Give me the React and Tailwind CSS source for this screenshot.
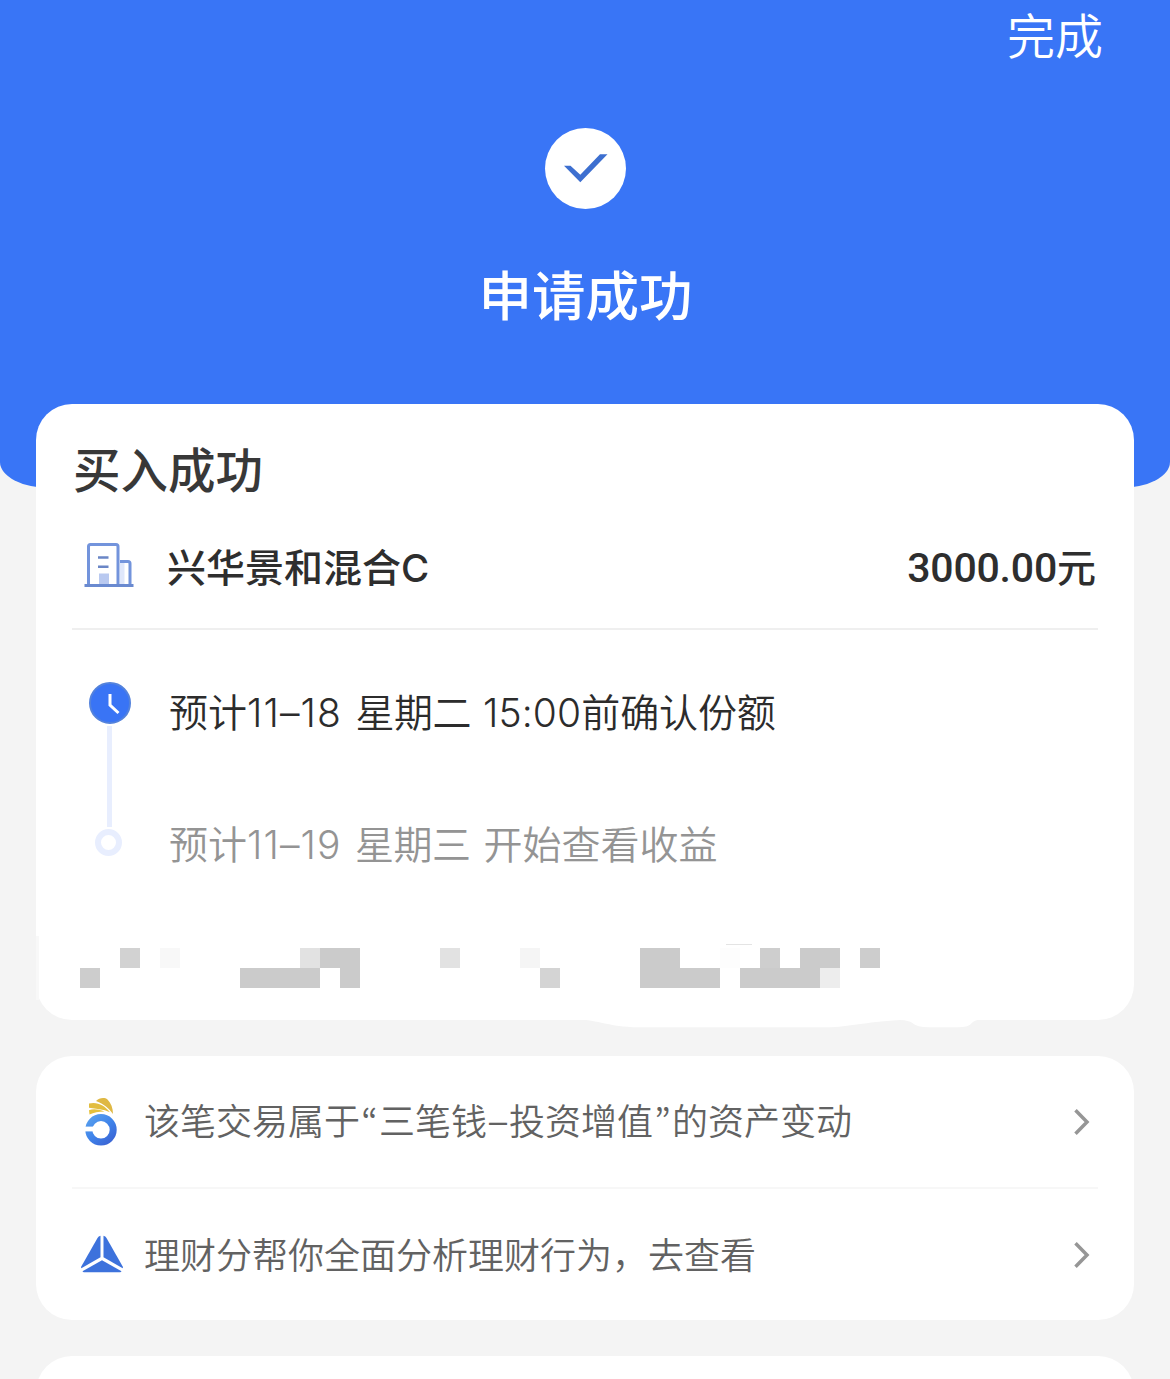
import React from "react";

const CJK = "font-['Noto_Sans_CJK_SC',sans-serif]";

const MOSAIC = [
  { 2: "bg-[#d2d2d2]", 4: "bg-[#f8f8f8]", 11: "bg-[#e2e2e2]", 12: "bg-[#cbcbcb]", 13: "bg-[#cbcbcb]", 18: "bg-[#e2e2e2]", 22: "bg-[#f5f5f5]", 28: "bg-[#cbcbcb]", 29: "bg-[#cbcbcb]", 32: "bg-[#fdfdfd]", 34: "bg-[#cecece]", 36: "bg-[#cbcbcb]", 37: "bg-[#cbcbcb]", 39: "bg-[#cdcdcd]" },
  { 0: "bg-[#cdcdcd]", 8: "bg-[#cbcbcb]", 9: "bg-[#cbcbcb]", 10: "bg-[#cbcbcb]", 11: "bg-[#cbcbcb]", 13: "bg-[#cbcbcb]", 23: "bg-[#d4d4d4]", 28: "bg-[#cbcbcb]", 29: "bg-[#cbcbcb]", 30: "bg-[#cbcbcb]", 31: "bg-[#cbcbcb]", 33: "bg-[#cbcbcb]", 34: "bg-[#cbcbcb]", 35: "bg-[#cbcbcb]", 36: "bg-[#cbcbcb]", 37: "bg-[#ededed]" },
];

function Mosaic() {
  return (
    <div className="grid w-[800px] grid-cols-[repeat(40,20px)] grid-rows-[20px_20px]">
      {MOSAIC.flatMap((row, r) =>
        Array.from({ length: 40 }, (_, c) => <div key={`${r}-${c}`} className={row[c] || "bg-white"} />)
      )}
    </div>
  );
}

function BuildingIcon() {
  return (
    <svg width="50" height="46" viewBox="0 0 50 46" fill="none">
      <rect x="15" y="31.500" width="10" height="11" fill="#b9c9f0" />
      <rect x="36" y="20" width="4.500" height="23" fill="#dfe7fb" />
      <path d="M4.500 43V4.500a2 2 0 0 1 2-2H32a2 2 0 0 1 2 2V43M36 19.500h8a2 2 0 0 1 2 2V43" stroke="#7394dc" strokeWidth="3" />
      <path d="M14 15.500h10.500M14 24.800h10.500" stroke="#6a86c6" strokeWidth="2.600" />
      <path d="M.5 43.500h49" stroke="#6a8ad0" strokeWidth="2.800" />
    </svg>
  );
}

function OrangeIcon() {
  return (
    <svg width="34" height="50" viewBox="0 0 34 50" fill="none">
      <defs>
        <linearGradient id="ring" x1="4" y1="18" x2="28" y2="48" gradientUnits="userSpaceOnUse">
          <stop stopColor="#5aa2ee" />
          <stop offset=".5" stopColor="#3f83ea" />
          <stop offset="1" stopColor="#3a5fd0" />
        </linearGradient>
      </defs>
      <circle cx="16" cy="32.800" r="12.200" stroke="url(#ring)" strokeWidth="7" />
      <rect x="0" y="29.600" width="10" height="4.800" fill="white" />
      <path d="M11 4C14 .8 19.500 0 22.500 2.500C26 6 28 11 28 17C24 11.500 19 7 11 4Z" fill="#dfb844" />
      <path d="M4 6.500C12 4.500 19.500 8 25 15.300C18 12 11 11.800 4 10.800Z" fill="#e2bd3f" />
      <path d="M4 13.200C8 11.800 13 12 19.500 14.500C13 14.500 9 15.500 4.500 17.500Z" fill="#e5c13c" />
    </svg>
  );
}

function TriangleIcon() {
  return (
    <svg width="44" height="38" viewBox="0 0 44 38" fill="#3d72dc" className="-mt-[2px]">
      <path d="M20.500.8V22.300L1.300 33.300Q.8 32.500 1.300 31.500L17.500 3Q18.500 1.300 20.500.8Z" />
      <path d="M23.500.8V22.300L42.700 33.300Q43.200 32.500 42.700 31.500L26.500 3Q25.500 1.300 23.500.8Z" />
      <path d="M22 25.200L41.500 36.300Q41 37.200 40 37.200H4Q3 37.200 2.500 36.300Z" />
    </svg>
  );
}

function Chevron() {
  return (
    <svg width="16" height="26" viewBox="0 0 16 26" fill="none" className="mr-[44px]">
      <path d="M1.500 1.300L13 13L1.500 24.700" stroke="#969696" strokeWidth="3.500" />
    </svg>
  );
}

function ActionRow({ icon, children }) {
  return (
    <div className="flex h-[132px] items-center">
      <div className="ml-[43px] flex w-[46px] shrink-0 justify-center">{icon}</div>
      <div className="ml-[19px] flex-1 whitespace-nowrap pb-[4px] text-[36px] font-[350] leading-[54px] text-[#626262]">{children}</div>
      <Chevron />
    </div>
  );
}

export default function App() {
  return (
    <div className={`h-[1379px] w-[1170px] overflow-hidden bg-[#f4f4f4] ${CJK}`}>
      <header className="flex h-[488px] flex-col items-center rounded-b-[50px_26px] bg-[#3975f6] text-white">
        <div className="mr-[67px] self-end text-[48px] font-[350] leading-[66px]">完成</div>
        <svg width="82" height="82" viewBox="0 0 82 82" className="mt-[61px]">
          <circle cx="41.500" cy="41.500" r="40.500" fill="white" />
          <path d="M20 38.800h6.500L36.300 47.700L56 27.300h7.500L36.300 55.300Z" fill="#3d6fd0" />
        </svg>
        <h1 className="ml-px mt-[44px] text-[53.500px] font-medium leading-[80px]">申请成功</h1>
      </header>

      <section className="relative mx-[36px] -mt-[84px] h-[616px] rounded-[36px] bg-white pt-[30px]">
        <h2 className="ml-[37px] text-[47.500px] font-medium leading-[68px] text-[#383838]">买入成功</h2>

        <div className="mx-[36px] flex h-[128px] items-center border-b-2 border-[#efefef] text-[39px] font-medium leading-[58px] text-[#2e2e2e]">
          <div className="-mt-px ml-[12px]"><BuildingIcon /></div>
          <div className="ml-[33px] mt-[2px] flex-1">兴华景和混合<span className="font-['Inter'] text-[38.5px]">C</span></div>
          <div className="mr-[2px] mt-[2px]"><span className="font-['Roboto'] text-[41px] tracking-[-0.2px]">3000.00</span>元</div>
        </div>

        <div className="flex pt-[52px]">
          <div className="ml-[53px] flex w-[42px] flex-col items-center">
            <svg width="42" height="42" viewBox="0 0 42 42" fill="none">
              <circle cx="21" cy="21" r="20" fill="#3974f5" stroke="#5382dc" strokeWidth="2" />
              <path d="M21 12V23L29.500 31" stroke="white" strokeWidth="3" />
            </svg>
            <div className="mr-px mt-[2px] h-[101px] w-[5px] bg-[#e8eefe]" />
            <div className="mr-[3px] mt-[2px] h-[27px] w-[27px] rounded-full border-[6px] border-[#e8eefe]" />
          </div>
          <div className="-mt-px ml-[38px] whitespace-pre text-[39px] font-[350] leading-[58px]">
            <p className="text-[#2c2c2c]">预计<span className="font-['Inter'] tracking-[1.1px] [word-spacing:1.5px]">11–18 </span><span className="tracking-[-0.5px]">星期二</span><span className="font-['Inter'] tracking-[0.1px] [word-spacing:1px]"> 15:00</span><span className="tracking-[-0.1px]">前确认份额</span></p>
            <p className="mt-[71px] text-[#949494]">预计<span className="font-['Inter'] tracking-[1.1px] [word-spacing:1.5px]">11–19 </span><span className="tracking-[-0.5px]">星期三</span><span className="font-['Inter'] [word-spacing:2px]"> </span>开始查看收益</p>
          </div>
        </div>

        <div className="absolute left-[44px] top-[544px]"><Mosaic /></div>
        <div className="absolute left-[690px] top-[540px] h-px w-[26px] bg-[#e4e4e4]" />
        <div className="absolute left-0 top-[532px] h-[64px] w-[3px] bg-[#f8f8f8]" />
        <svg className="absolute left-[540px] top-[615px]" width="410" height="9" viewBox="0 0 410 14" preserveAspectRatio="none" fill="white">
          <path d="M0 0C24 2 32 12 62 13H250C276 12 286 5 324 1.500Q333 2 336 6Q341 13 353 13H382Q393 13 396 6Q398 1 410 0Z" />
        </svg>
      </section>

      <section className="mx-[36px] mt-[36px] h-[264px] rounded-[36px] bg-white">
        <ActionRow icon={<OrangeIcon />}>
          该笔交易属于<span className="inline-block w-[19px] text-center font-['Noto_Sans_CJK_KR']">“</span>三笔钱<span className="inline-block w-[22px] text-center font-['Inter']">–</span>投资增值<span className="inline-block w-[19px] text-center font-['Noto_Sans_CJK_KR']">”</span>的资产变动
        </ActionRow>
        <div className="mx-[36px] -mt-px h-[2px] bg-[#f7f7f7]" />
        <ActionRow icon={<TriangleIcon />}>理财分帮你全面分析理财行为，去查看</ActionRow>
      </section>

      <section className="mx-[36px] mt-[36px] h-[100px] rounded-[36px] bg-white" />
    </div>
  );
}
